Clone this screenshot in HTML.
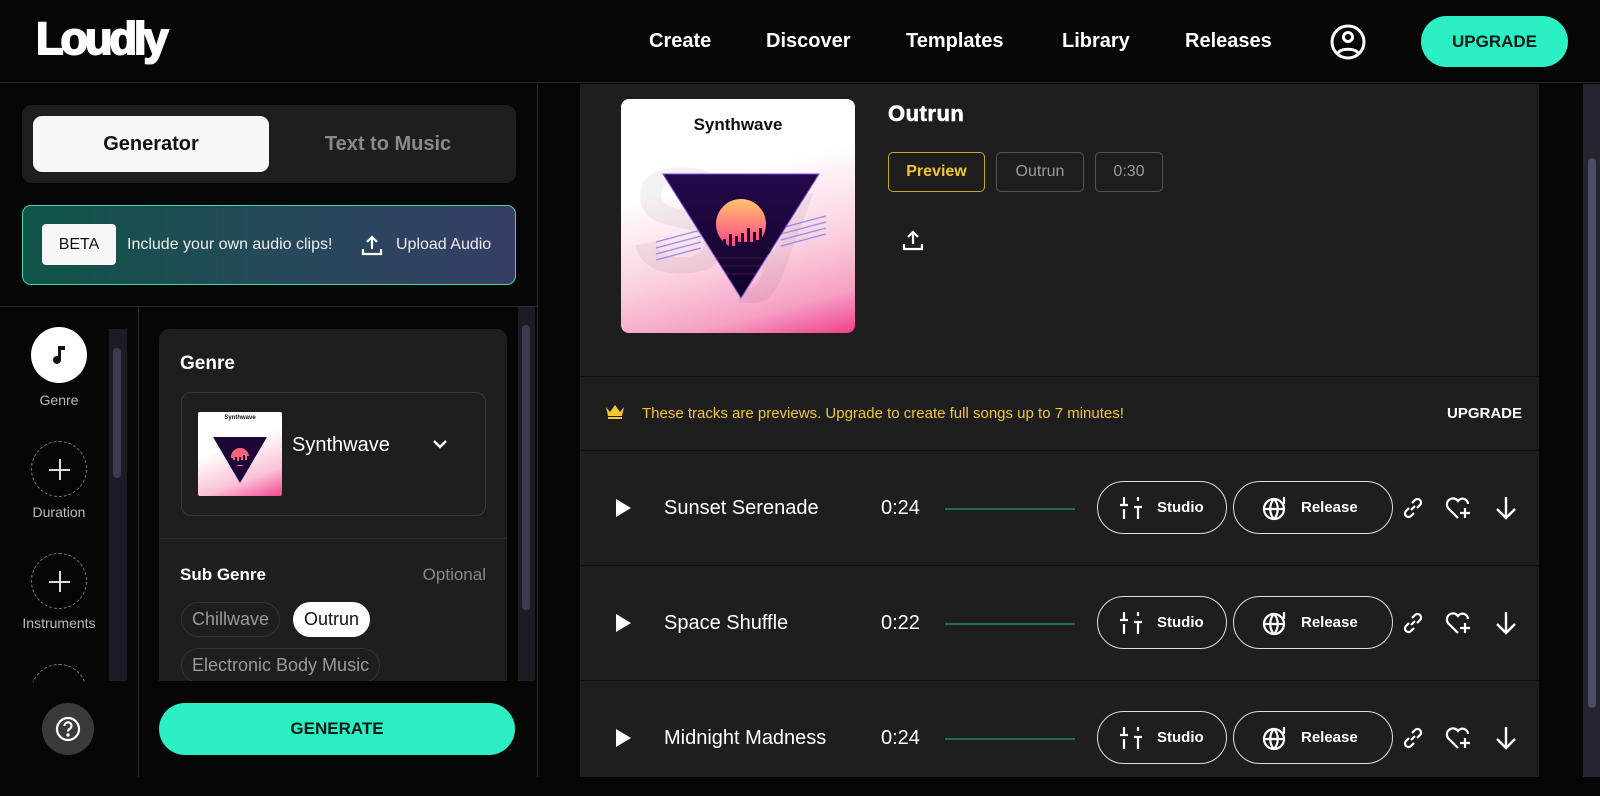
<!DOCTYPE html>
<html><head><meta charset="utf-8"><style>
*{box-sizing:border-box;margin:0;padding:0}
body{width:1600px;height:777px;background:#060606;font-family:"Liberation Sans",sans-serif;color:#fff;position:relative;overflow:hidden}
.a{position:absolute}
.nav{top:30px;font-size:20px;font-weight:bold;color:#fff}
.chip{position:absolute;border:1px solid #555;border-radius:5px;height:40px;line-height:38px;text-align:center;font-size:16px;color:#9a9a9a}
.pill{position:absolute;border-radius:20px;height:35px;line-height:33px;padding:0 10px;font-size:18px;color:#9a9a9a;border:1px solid #333}
.row{position:absolute;left:580px;width:959px;height:115px;border-bottom:1px solid #111}
.btn{position:absolute;top:-27px;height:53px;border:1px solid #ddd;border-radius:27px;font-size:15px;font-weight:bold;line-height:51px}
.circ{position:absolute;left:31px;width:56px;height:56px;border-radius:50%;border:1px dashed #777}
.circ:before{content:"";position:absolute;left:17px;top:27px;width:21px;height:2px;background:#ddd}
.circ:after{content:"";position:absolute;left:27px;top:17px;width:2px;height:21px;background:#ddd}
.lbl{position:absolute;width:118px;text-align:center;font-size:14px;color:#bbb}
</style></head><body>
<!-- header -->
<div class="a" style="left:0;top:0;width:1600px;height:83px;background:#060606;border-bottom:1px solid #2a2a2a"></div>
<div class="a" style="left:36px;top:13px;font-size:45px;font-weight:bold;letter-spacing:-3px;color:#fff;-webkit-text-stroke:2px #fff">Loudly</div>
<div class="a nav" style="left:649px">Create</div>
<div class="a nav" style="left:766px">Discover</div>
<div class="a nav" style="left:906px">Templates</div>
<div class="a nav" style="left:1062px">Library</div>
<div class="a nav" style="left:1185px">Releases</div>
<svg class="a" style="left:1330px;top:24px" width="36" height="36" viewBox="0 0 36 36" fill="none" stroke="#fff" stroke-width="3"><circle cx="18" cy="18" r="16"/><circle cx="18" cy="13" r="4.5"/><path d="M8 29c3-5 17-5 20 0"/></svg>
<div class="a" style="left:1421px;top:16px;width:147px;height:51px;border-radius:26px;background:#2af0c4;color:#0b1a16;font-weight:bold;font-size:17px;text-align:center;line-height:51px">UPGRADE</div>

<!-- left panel -->
<div class="a" style="left:537px;top:84px;width:1px;height:693px;background:#2a2a2a"></div>
<div class="a" style="left:22px;top:105px;width:494px;height:78px;border-radius:10px;background:#1e1e1e"></div>
<div class="a" style="left:33px;top:116px;width:236px;height:56px;border-radius:9px;background:#f7f7f7;color:#111;font-weight:bold;font-size:20px;text-align:center;line-height:56px">Generator</div>
<div class="a" style="left:270px;top:116px;width:236px;height:56px;color:#8a8a8a;font-weight:bold;font-size:20px;text-align:center;line-height:56px">Text to Music</div>
<div class="a" style="left:22px;top:205px;width:494px;height:80px;border-radius:9px;border:1.5px solid #3fd8a8;background:linear-gradient(90deg,#0f5448,#27485a 55%,#353e66)"></div>
<div class="a" style="left:42px;top:224px;width:74px;height:41px;border-radius:4px;background:#f7f7f7;color:#111;font-size:16px;text-align:center;line-height:41px">BETA</div>
<div class="a" style="left:127px;top:236px;font-size:16px;color:#eee">Include your own audio clips!</div>
<svg class="a" style="left:360px;top:233px" width="24" height="24" viewBox="0 0 24 24" fill="none" stroke="#fff" stroke-width="2.2"><path d="M12 16V4M7 9l5-5 5 5M3 16v5h18v-5"/></svg>
<div class="a" style="left:396px;top:236px;font-size:16px;color:#eee">Upload Audio</div>
<div class="a" style="left:0;top:306px;width:537px;height:1px;background:#2a2a2a"></div>
<div class="a" style="left:138px;top:307px;width:1px;height:470px;background:#2a2a2a"></div>
<!-- sidebar steps -->
<div class="a" style="left:31px;top:327px;width:56px;height:56px;border-radius:50%;background:#fff"></div>
<svg class="a" style="left:49px;top:344px" width="20" height="22" viewBox="0 0 20 22"><path d="M9 2h7v4h-4v10a4 4 0 1 1-3-3.9z" fill="#111"/></svg>
<div class="lbl" style="left:0;top:392px">Genre</div>
<div class="circ" style="top:441px"></div>
<div class="lbl" style="left:0;top:504px">Duration</div>
<div class="circ" style="top:553px"></div>
<div class="lbl" style="left:0;top:615px">Instruments</div>
<div class="a" style="left:31px;top:664px;width:56px;height:18px;overflow:hidden"><div style="width:56px;height:56px;border-radius:50%;border:1px dashed #777"></div></div>
<div class="a" style="left:109px;top:329px;width:18px;height:352px;background:#1c1d24"></div>
<div class="a" style="left:113px;top:348px;width:8px;height:130px;border-radius:4px;background:#3a3d52"></div>
<div class="a" style="left:42px;top:703px;width:52px;height:52px;border-radius:50%;background:#3a3a3a"></div>
<svg class="a" style="left:55px;top:716px" width="26" height="26" viewBox="0 0 26 26" fill="none" stroke="#fff" stroke-width="2.2"><circle cx="13" cy="13" r="11"/><path d="M9.5 10a3.5 3.5 0 1 1 5 3c-1.2.6-1.5 1.3-1.5 2.5"/><circle cx="13" cy="19" r=".6" fill="#fff"/></svg>
<!-- genre card -->
<div class="a" style="left:159px;top:329px;width:348px;height:352px;border-radius:10px 10px 0 0;background:#1e1e1e;overflow:hidden">
 <div class="a" style="left:21px;top:24px;font-size:19px;font-weight:bold">Genre</div>
 <div class="a" style="left:22px;top:63px;width:305px;height:124px;border:1px solid #3a3a3a;border-radius:10px"></div>
 <div class="a" style="left:39px;top:83px;width:84px;height:84px;background:linear-gradient(160deg,#fff 40%,#f9c1d8 75%,#f3468e);border-radius:2px">
  <div style="position:absolute;top:3px;width:84px;text-align:center;font-size:6px;font-weight:bold;color:#111">Synthwave</div>
  <svg style="position:absolute;left:13px;top:23px" width="58" height="50" viewBox="0 0 58 50"><path d="M2 2h54L29 48z" fill="#1c0638"/><circle cx="29" cy="22" r="9" fill="#f9667a"/><path d="M18 30h22v-6h-2v-3h-2v4h-2v-5h-2v5h-2v-3h-2v4h-2v-4h-2v3h-2v-2h-2z" fill="#1c0638"/></svg>
 </div>
 <div class="a" style="left:133px;top:105px;font-size:20px;color:#fff">Synthwave</div>
 <svg class="a" style="left:272px;top:108px" width="18" height="14" viewBox="0 0 18 14" fill="none" stroke="#fff" stroke-width="2.4"><path d="M3 4l6 6 6-6"/></svg>
 <div class="a" style="left:0;top:209px;width:348px;height:1px;background:#2c2c2c"></div>
 <div class="a" style="left:21px;top:236px;font-size:17px;font-weight:bold">Sub Genre</div>
 <div class="a" style="right:21px;top:236px;font-size:17px;color:#888">Optional</div>
 <div class="pill" style="left:22px;top:273px">Chillwave</div>
 <div class="pill" style="left:134px;top:273px;background:#fff;color:#111;border-color:#fff">Outrun</div>
 <div class="pill" style="left:22px;top:319px">Electronic Body Music</div>
</div>
<div class="a" style="left:518px;top:307px;width:17px;height:374px;background:#1c1d24"></div>
<div class="a" style="left:522px;top:325px;width:8px;height:285px;border-radius:4px;background:#3a3d52"></div>
<div class="a" style="left:159px;top:703px;width:356px;height:52px;border-radius:26px;background:#2af0c4;color:#0b1a16;font-weight:bold;font-size:17px;text-align:center;line-height:52px">GENERATE</div>

<!-- main card -->
<div class="a" style="left:580px;top:84px;width:959px;height:693px;background:#1e1e1e"></div>
<div class="a" style="left:621px;top:99px;width:234px;height:234px;border-radius:8px;overflow:hidden;background:linear-gradient(165deg,#fff 35%,#fbd0e2 65%,#f6a0c4 85%,#f0408a)">
 <div style="position:absolute;left:10px;top:35px;font-size:150px;font-weight:900;color:rgba(0,0,0,.05)">Sy</div>
 <div style="position:absolute;top:16px;width:234px;text-align:center;font-size:17px;font-weight:900;color:#111">Synthwave</div>
 <svg style="position:absolute;left:32px;top:73px" width="180" height="130" viewBox="0 0 180 130"><defs><linearGradient id="t2" x1="0" y1="0" x2="0" y2="1"><stop offset="0" stop-color="#25094a"/><stop offset="1" stop-color="#0f0428"/></linearGradient><linearGradient id="s2" x1="0" y1="0" x2="0" y2="1"><stop offset="0" stop-color="#ffc46e"/><stop offset="1" stop-color="#ff3d8a"/></linearGradient><clipPath id="cp"><path d="M10 2h156L88 126z"/></clipPath></defs>
 <g stroke="#8f8fe8" stroke-width="1.3"><path d="M3 70l45-12M3 76l45-12M3 82l45-12M3 88l45-12M128 56l45-12M128 62l45-12M128 68l45-12M128 74l45-12"/></g>
 <path d="M10 2h156L88 126z" fill="url(#t2)" stroke="#7a4ad8" stroke-width="1"/>
 <g clip-path="url(#cp)">
 <circle cx="88" cy="52" r="25" fill="url(#s2)"/>
 <path d="M58 82h60v-8l-3-2v-10h-3v6h-3v-12h-3v12h-3v-8h-3v10h-3v-14h-3v14h-3v-9h-3v9h-3v-6h-3v10h-3v-12h-3v12h-3v-7h-3v9h-4z" fill="#1a0635"/>
 <g stroke="#ff3d8a" stroke-width=".6" opacity=".5"><path d="M40 86h100M45 94h90M52 102h72"/></g>
 </g>
 </svg>
</div>
<div class="a" style="left:888px;top:101px;font-size:22px;font-weight:900;letter-spacing:.5px;-webkit-text-stroke:.6px #fff">Outrun</div>
<div class="chip" style="left:888px;top:152px;width:97px;border-color:#c9a52a;color:#f3c632;font-weight:bold">Preview</div>
<div class="chip" style="left:996px;top:152px;width:88px">Outrun</div>
<div class="chip" style="left:1095px;top:152px;width:68px">0:30</div>
<svg class="a" style="left:901px;top:228px" width="24" height="24" viewBox="0 0 24 24" fill="none" stroke="#fff" stroke-width="2.2"><path d="M12 16V4M7 9l5-5 5 5M3 16v5h18v-5"/></svg>
<div class="a" style="left:580px;top:376px;width:959px;height:1px;background:#111"></div>
<svg class="a" style="left:605px;top:404px" width="20" height="16" viewBox="0 0 20 16"><path d="M1 3l4 5 5-7 5 7 4-5-2 9H3z" fill="#f3c632"/><rect x="3" y="13" width="14" height="2" fill="#f3c632"/></svg>
<div class="a" style="left:642px;top:405px;font-size:15px;color:#f3c632">These tracks are previews. Upgrade to create full songs up to 7 minutes!</div>
<div class="a" style="left:1447px;top:405px;font-size:15px;font-weight:bold">UPGRADE</div>
<div class="a" style="left:580px;top:450px;width:959px;height:1px;background:#111"></div>

<!-- rows -->
<div class="row" style="top:451px"><div class="a" style="top:57px;left:0;width:959px;height:0">
<div class="a" style="left:36px;top:-9px;width:0;height:0;border-left:15px solid #fff;border-top:9px solid transparent;border-bottom:9px solid transparent"></div>
<div class="a" style="left:84px;top:-11px;font-size:20px">Sunset Serenade</div>
<div class="a" style="left:301px;top:-11px;font-size:20px">0:24</div>
<div class="a" style="left:365px;top:0;width:130px;height:2px;background:#1d6b58"></div>
<div class="btn" style="left:517px;width:130px"><svg style="position:absolute;left:20px;top:13px" width="26" height="26" viewBox="0 0 26 26" stroke="#fff" stroke-width="2.2"><path d="M6 2v8M2 10h8M6 14v10M20 2v4M16 12h8M20 12v12"/></svg><span style="position:absolute;left:59px">Studio</span></div>
<div class="btn" style="left:653px;width:160px"><svg style="position:absolute;left:28px;top:13px" width="28" height="28" viewBox="0 0 28 28" fill="none" stroke="#fff" stroke-width="2.2"><circle cx="12" cy="14" r="10"/><path d="M2 14h20M12 4c-5 5-5 15 0 20M12 4c5 5 5 15 0 20M22 2v7"/></svg><span style="position:absolute;left:67px">Release</span></div>
<svg class="a" style="left:820px;top:-13px" width="26" height="26" viewBox="0 0 26 26" fill="none" stroke="#fff" stroke-width="2.2"><path d="M11 15l4-4M9 13l-3 3a3.5 3.5 0 0 0 5 5l3-3M17 13l3-3a3.5 3.5 0 0 0-5-5l-3 3"/></svg>
<svg class="a" style="left:864px;top:-14px" width="30" height="28" viewBox="0 0 30 28" fill="none" stroke="#fff" stroke-width="2.2"><path d="M14 24L4 14a5.5 5.5 0 0 1 10-7 5.5 5.5 0 0 1 10 3M21 14v10M16 19h10"/></svg>
<svg class="a" style="left:914px;top:-13px" width="24" height="26" viewBox="0 0 24 26" fill="none" stroke="#fff" stroke-width="2.4"><path d="M12 2v21M3 14l9 9 9-9"/></svg>
</div></div>
<div class="row" style="top:566px"><div class="a" style="top:57px;left:0;width:959px;height:0">
<div class="a" style="left:36px;top:-9px;width:0;height:0;border-left:15px solid #fff;border-top:9px solid transparent;border-bottom:9px solid transparent"></div>
<div class="a" style="left:84px;top:-11px;font-size:20px">Space Shuffle</div>
<div class="a" style="left:301px;top:-11px;font-size:20px">0:22</div>
<div class="a" style="left:365px;top:0;width:130px;height:2px;background:#1d6b58"></div>
<div class="btn" style="left:517px;width:130px"><svg style="position:absolute;left:20px;top:13px" width="26" height="26" viewBox="0 0 26 26" stroke="#fff" stroke-width="2.2"><path d="M6 2v8M2 10h8M6 14v10M20 2v4M16 12h8M20 12v12"/></svg><span style="position:absolute;left:59px">Studio</span></div>
<div class="btn" style="left:653px;width:160px"><svg style="position:absolute;left:28px;top:13px" width="28" height="28" viewBox="0 0 28 28" fill="none" stroke="#fff" stroke-width="2.2"><circle cx="12" cy="14" r="10"/><path d="M2 14h20M12 4c-5 5-5 15 0 20M12 4c5 5 5 15 0 20M22 2v7"/></svg><span style="position:absolute;left:67px">Release</span></div>
<svg class="a" style="left:820px;top:-13px" width="26" height="26" viewBox="0 0 26 26" fill="none" stroke="#fff" stroke-width="2.2"><path d="M11 15l4-4M9 13l-3 3a3.5 3.5 0 0 0 5 5l3-3M17 13l3-3a3.5 3.5 0 0 0-5-5l-3 3"/></svg>
<svg class="a" style="left:864px;top:-14px" width="30" height="28" viewBox="0 0 30 28" fill="none" stroke="#fff" stroke-width="2.2"><path d="M14 24L4 14a5.5 5.5 0 0 1 10-7 5.5 5.5 0 0 1 10 3M21 14v10M16 19h10"/></svg>
<svg class="a" style="left:914px;top:-13px" width="24" height="26" viewBox="0 0 24 26" fill="none" stroke="#fff" stroke-width="2.4"><path d="M12 2v21M3 14l9 9 9-9"/></svg>
</div></div>
<div class="row" style="top:681px;border:none"><div class="a" style="top:57px;left:0;width:959px;height:0">
<div class="a" style="left:36px;top:-9px;width:0;height:0;border-left:15px solid #fff;border-top:9px solid transparent;border-bottom:9px solid transparent"></div>
<div class="a" style="left:84px;top:-11px;font-size:20px">Midnight Madness</div>
<div class="a" style="left:301px;top:-11px;font-size:20px">0:24</div>
<div class="a" style="left:365px;top:0;width:130px;height:2px;background:#1d6b58"></div>
<div class="btn" style="left:517px;width:130px"><svg style="position:absolute;left:20px;top:13px" width="26" height="26" viewBox="0 0 26 26" stroke="#fff" stroke-width="2.2"><path d="M6 2v8M2 10h8M6 14v10M20 2v4M16 12h8M20 12v12"/></svg><span style="position:absolute;left:59px">Studio</span></div>
<div class="btn" style="left:653px;width:160px"><svg style="position:absolute;left:28px;top:13px" width="28" height="28" viewBox="0 0 28 28" fill="none" stroke="#fff" stroke-width="2.2"><circle cx="12" cy="14" r="10"/><path d="M2 14h20M12 4c-5 5-5 15 0 20M12 4c5 5 5 15 0 20M22 2v7"/></svg><span style="position:absolute;left:67px">Release</span></div>
<svg class="a" style="left:820px;top:-13px" width="26" height="26" viewBox="0 0 26 26" fill="none" stroke="#fff" stroke-width="2.2"><path d="M11 15l4-4M9 13l-3 3a3.5 3.5 0 0 0 5 5l3-3M17 13l3-3a3.5 3.5 0 0 0-5-5l-3 3"/></svg>
<svg class="a" style="left:864px;top:-14px" width="30" height="28" viewBox="0 0 30 28" fill="none" stroke="#fff" stroke-width="2.2"><path d="M14 24L4 14a5.5 5.5 0 0 1 10-7 5.5 5.5 0 0 1 10 3M21 14v10M16 19h10"/></svg>
<svg class="a" style="left:914px;top:-13px" width="24" height="26" viewBox="0 0 24 26" fill="none" stroke="#fff" stroke-width="2.4"><path d="M12 2v21M3 14l9 9 9-9"/></svg>
</div></div>

<!-- right scrollbar -->
<div class="a" style="left:1583px;top:84px;width:17px;height:693px;background:#23252f"></div>
<div class="a" style="left:1588px;top:158px;width:8px;height:550px;border-radius:4px;background:#4a4d66"></div>
</body></html>
